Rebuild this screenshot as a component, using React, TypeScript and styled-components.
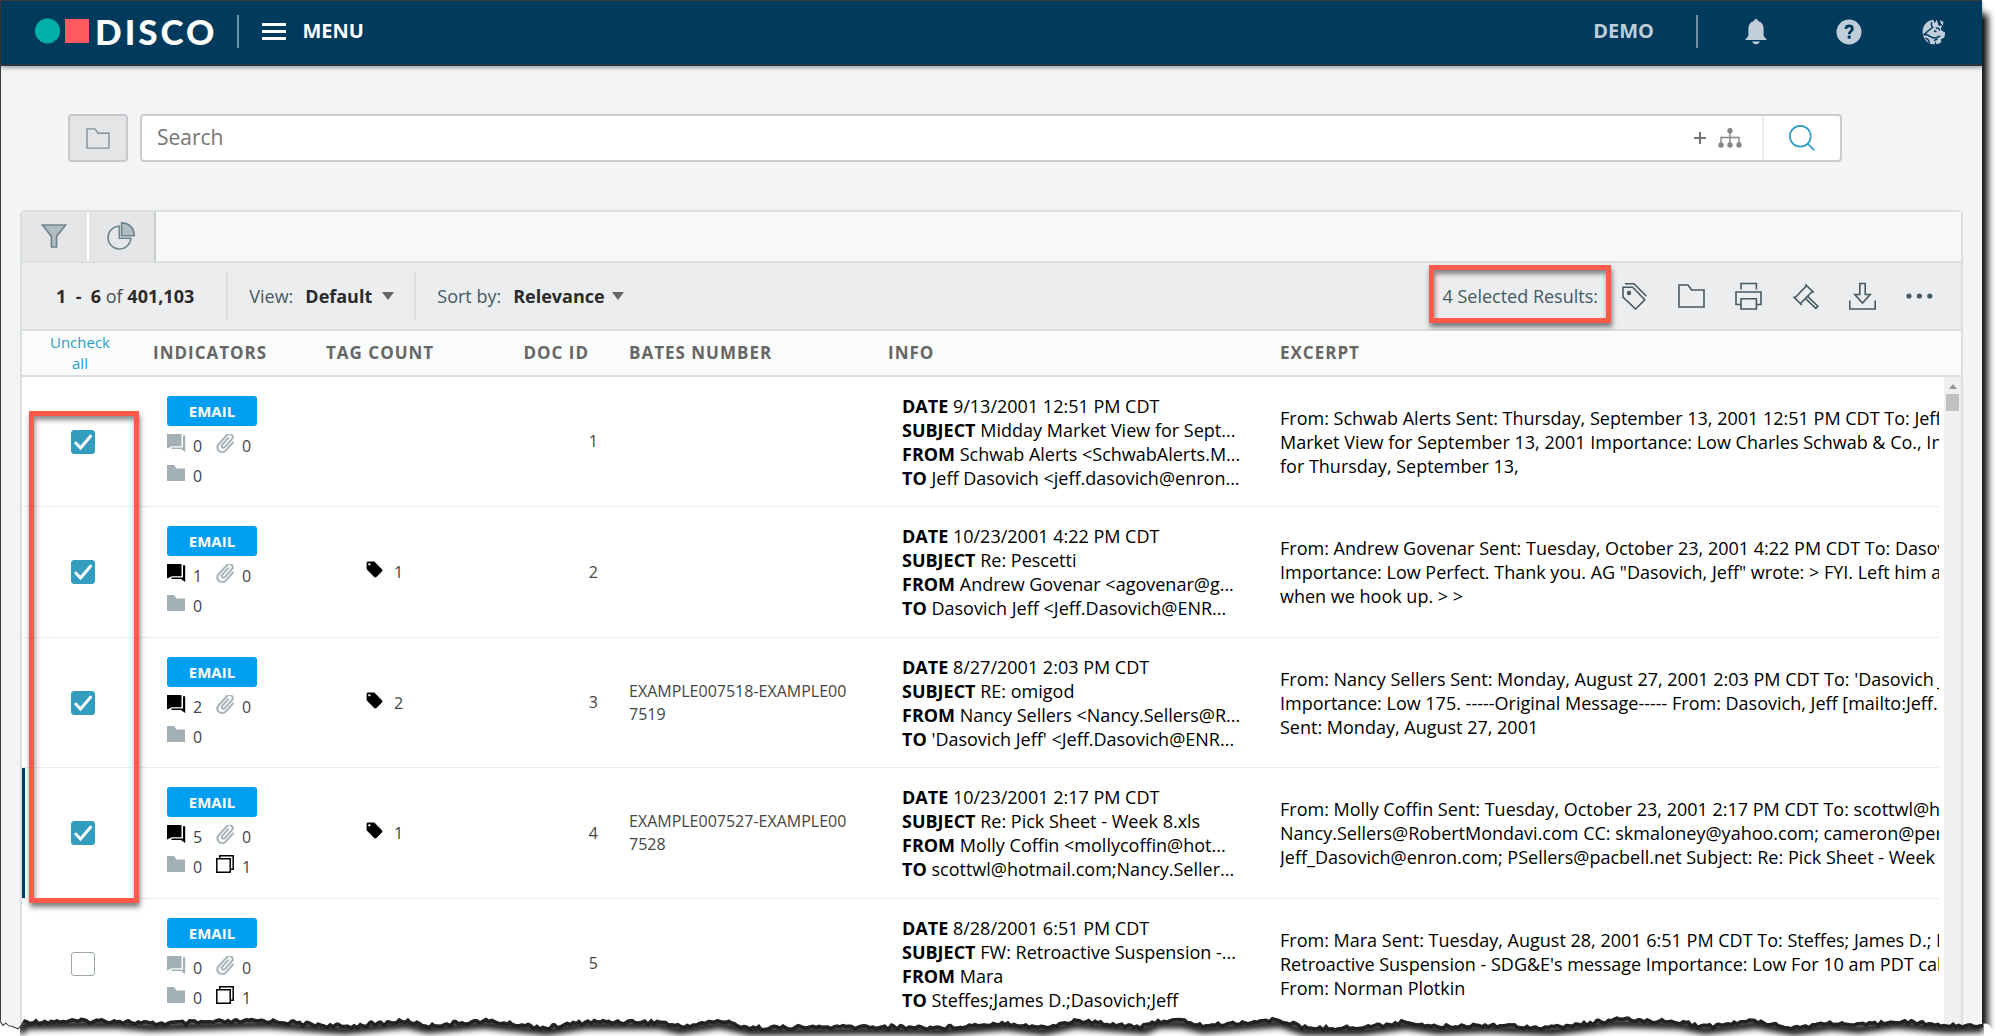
import React from "react";
import styled, { createGlobalStyle } from "styled-components";
import { MdLocalOffer } from "react-icons/md";

const c = {
  navy: "#003a5d",
  page: "#f3f4f6",
  line: "#dcdfe0",
  tool: "#ecedef",
  slate: "#455a64",
  blue: "#2e9bc4",
  email: "#009ff2",
  muted: "#a3b0b6",
  red: "#ff5a4a",
};

const GlobalStyle = createGlobalStyle`
  *, *::before, *::after { box-sizing: border-box; }
  html, body, #root { height: 100%; }
  body {
    margin: 0;
    overflow: hidden;
    background: #fff;
    font-family: "Open Sans", "Noto Sans", sans-serif;
    color: #000;
  }
  button, input, select { font: inherit; color: inherit; }
  svg { display: block; }
`;

const Stage = styled.div`
  position: relative;
  height: 100vh;
  padding-right: 13px;
  overflow: hidden;
`;

const Window = styled.div`
  display: flex;
  flex-direction: column;
  height: 100%;
  background: ${c.page};
  border-top: 1px solid #3d3d3d;
  border-left: 1px solid #3d3d3d;
  box-shadow: 6px 14px 7px #111;
`;

const Header = styled.header`
  display: flex;
  align-items: center;
  height: 65px;
  padding: 0 35px 3px 34px;
  background: ${c.navy};
  border-bottom: 2px solid #2b333c;
  box-shadow: 0 2px 4px rgba(0, 0, 0, 0.35);
`;

const LogoGroup = styled.div`
  display: flex;
  align-items: center;
  gap: 20px;
`;

const Logo = styled.a`
  display: flex;
  align-items: center;
  gap: 5px;
  height: 28px;
  color: #fff;
  text-decoration: none;
  font: 900 35px/28px Lato, "Open Sans", sans-serif;
  letter-spacing: 3px;
`;

const HeaderRule = styled.span`
  width: 2px;
  height: 33px;
  background: #6f90a5;
`;

const MenuButton = styled.button`
  display: flex;
  align-items: center;
  gap: 16px;
  margin-left: 23px;
  padding: 0;
  border: 0;
  background: none;
  color: #fff;
  font-size: 20px;
  font-weight: 700;
  line-height: 28px;
`;

const HeaderRight = styled.div`
  display: flex;
  align-items: center;
  margin-left: auto;
  color: #bfced8;
`;

const TextButton = styled.button`
  margin-right: 42px;
  padding: 0;
  border: 0;
  background: none;
  font-size: 20px;
  font-weight: 700;
  line-height: 28px;
`;

const HeaderIcons = styled.div`
  display: flex;
  gap: 66px;
  margin-left: 44px;
  padding-top: 2px;
  > :last-child { margin-left: -8px; }
`;

const IconButton = styled.button`
  display: grid;
  place-items: center;
  width: 27px;
  height: 28px;
  padding: 0;
  border: 0;
  background: none;
`;

const SearchRow = styled.form`
  display: flex;
  gap: 12px;
  height: 48px;
  margin: 48px 140px 48px 67px;
`;

const FolderButton = styled.button`
  display: grid;
  place-items: center;
  width: 60px;
  padding: 0;
  border: 2px solid #c6c9cb;
  border-radius: 4px;
  background: #e4e5e7;
`;

const SearchBox = styled.div`
  display: flex;
  flex: 1;
  align-items: center;
  border: 2px solid #c9cccd;
  border-radius: 4px;
  background: #fff;
`;

const SearchInput = styled.input`
  flex: 1;
  min-width: 0;
  padding: 0 0 3px 15px;
  border: 0;
  outline: 0;
  background: none;
  font-size: 21px;
  line-height: 32px;
  &::placeholder {
    color: #757575;
    opacity: 1;
  }
`;

const SearchExtras = styled.div`
  display: flex;
  align-items: center;
  gap: 12px;
  margin-right: 20px;
`;

const SearchSubmit = styled.button`
  display: grid;
  place-items: center;
  width: 78px;
  height: 44px;
  padding: 0;
  border: 0;
  border-left: 2px solid #ebeced;
  background: none;
`;

const Panel = styled.main`
  display: flex;
  flex: 1;
  flex-direction: column;
  min-height: 0;
  margin: 0 19px;
  border: 2px solid ${c.line};
  border-bottom: 0;
  border-radius: 5px 5px 0 0;
  background: #fff;
`;

const Tabs = styled.div`
  display: flex;
  height: 51px;
  background: #f7f9f9;
  border-bottom: 2px solid ${c.line};
`;

const Tab = styled.button`
  display: grid;
  place-items: center;
  width: 67px;
  padding: 0 1px 1px 0;
  border: 0;
  border-right: 2px solid ${(p: { $last?: boolean }) => (p.$last ? "#c9cccd" : "#fff")};
  background: #e4e6e7;
`;

const Toolbar = styled.div`
  display: flex;
  flex: none;
  align-items: center;
  height: 68px;
  padding: 0 28px 0 34px;
  background: ${c.tool};
  border-bottom: 2px solid ${c.line};
  color: ${c.slate};
  font-size: 18px;
  line-height: 24px;
`;

const Range = styled.div`
  padding-right: 12px;
  white-space: pre;
  color: #4c4c4c;
  b { color: #2b2b2b; }
`;

const ToolRule = styled.span`
  width: 2px;
  height: 50px;
  margin: 0 21px 0 20px;
  background: #dcdfe1;
`;

const Picker = styled.label`
  display: flex;
  align-items: center;
  gap: 12px;
  svg { margin-left: -5px; }
`;

const PickerSelect = styled.select`
  appearance: none;
  min-width: 70px;
  padding: 0;
  border: 0;
  outline: 0;
  background: none;
  color: #2b2b2b;
  font-weight: 700;
`;

const Selection = styled.div`
  display: flex;
  align-items: center;
  gap: 10px;
  margin-left: auto;
`;

const SelectedCount = styled.output`
  display: block;
  margin-bottom: 4px;
  padding: 14px 8px 10px;
  border: 5px solid ${c.red};
  box-shadow: 1px 4px 5px rgba(0, 0, 0, 0.5), inset 1px 4px 5px rgba(0, 0, 0, 0.45);
`;

const Actions = styled.div`
  display: flex;
  gap: 30px;
`;

const List = styled.div`
  position: relative;
  display: flex;
  flex: 1;
  min-height: 0;
  overflow: hidden;
`;

const Table = styled.table`
  flex: 1;
  width: 100%;
  min-width: 0;
  height: max-content;
  border-collapse: separate;
  border-spacing: 0;
  table-layout: fixed;
`;

const Col = styled.col`
  width: ${(p: { $w?: number }) => (p.$w ? `${p.$w}px` : "auto")};
`;

const Th = styled.th`
  height: 46px;
  padding: ${(p: { $end?: boolean }) => (p.$end ? "0 31px 0 0" : "0 0 0 9px")};
  background: #fafcfb;
  border-bottom: 2px solid ${c.line};
  color: #666;
  font-size: 17px;
  font-weight: 700;
  letter-spacing: 1px;
  line-height: 20px;
  text-align: ${(p: { $end?: boolean }) => (p.$end ? "right" : "left")};
`;

const CheckTh = styled(Th)`
  padding: 0 6px 0 0;
  text-align: center;
`;

const UncheckAll = styled.button`
  width: 76px;
  padding: 0;
  border: 0;
  background: none;
  color: ${c.blue};
  font-size: 15px;
  font-weight: 400;
  line-height: 21px;
`;

const Td = styled.td`
  height: 130px;
  padding: 0 0 0 ${(p: { $left?: number }) => p.$left ?? 9}px;
  border-bottom: 1px solid #ececee;
  color: #444;
  font-size: 16px;
  line-height: 23px;
`;

const Row = styled.tr`
  &:nth-child(even) > td { height: 131px; }
  > td:first-child {
    box-shadow: ${(p: { $current?: boolean }) => (p.$current ? `inset 3px 0 0 ${c.navy}` : "none")};
  }
`;

const NumberTd = styled(Td)`
  padding: 0 22px 0 0;
  text-align: right;
`;

const BatesTd = styled(Td)`
  padding-right: 24px;
  word-break: break-all;
`;

const CheckLabel = styled.label`
  display: grid;
  place-items: center;
  > * { grid-area: 1 / 1; }
  svg { pointer-events: none; }
`;

const CheckInput = styled.input`
  appearance: none;
  width: 24px;
  height: 24px;
  margin: 0;
  border: 1px solid #9aa7ad;
  border-radius: 3px;
  background: #fff;
  &:checked {
    border-color: #329dbe;
    background: #329dbe;
  }
`;

const Badge = styled.span`
  display: block;
  width: 90px;
  margin: 0 0 8px;
  border-radius: 3px;
  background: ${c.email};
  color: #fff;
  font-size: 15px;
  font-weight: 700;
  line-height: 30px;
  text-align: center;
`;

const Indicators = styled.div`
  display: grid;
  grid-template-columns: 49px 49px;
  grid-template-rows: 30px 24px;
`;

const Indicator = styled.span`
  display: flex;
  gap: 7px;
  color: ${(p: { $on?: boolean }) => (p.$on ? "#000" : c.muted)};
`;

const Count = styled.span`
  color: #444;
  line-height: 24px;
`;

const TagCount = styled.span`
  display: flex;
  gap: 10px;
  color: #000;
`;

const InfoLine = styled.div`
  width: 350px;
  overflow: hidden;
  color: #000;
  font-size: 18px;
  line-height: 24px;
  white-space: nowrap;
`;

const Excerpt = styled.div`
  overflow: hidden;
  color: #000;
  font-size: 18px;
  line-height: 24px;
  white-space: pre;
`;

const ScrollSide = styled.div`
  display: flex;
  flex-direction: column;
  width: 22px;
`;

const ScrollHead = styled.div`
  height: 46px;
  background: #fafcfb;
  border-bottom: 2px solid ${c.line};
`;

const Track = styled.div`
  display: flex;
  flex: 1;
  flex-direction: column;
  align-items: center;
  gap: 5px;
  margin-left: 5px;
  padding-top: 7px;
  background: #f0f0f0;
`;

const Thumb = styled.div`
  width: 13px;
  height: 17px;
  background: #c1c1c1;
`;

const ColumnMarker = styled.div`
  position: absolute;
  top: 80px;
  left: 7px;
  width: 110px;
  height: 492px;
  border: 5px solid ${c.red};
  box-shadow: 1px 4px 5px rgba(0, 0, 0, 0.5), inset 1px 4px 5px rgba(0, 0, 0, 0.45);
  pointer-events: none;
`;

const TornEdge = styled.svg`
  position: absolute;
  bottom: 0;
  left: 0;
  width: 100%;
  height: 40px;
`;

/* ---------- icons ---------- */

const LogoMark = () => (
  <svg width="55" height="26" viewBox="0 0 55 26" aria-hidden="true">
    <circle cx="12.5" cy="13" r="12.5" fill="#00b0a9" />
    <rect x="30" y="1" width="24" height="24" fill="#ff5a5f" />
  </svg>
);

const Burger = () => (
  <svg width="24" height="17" viewBox="0 0 24 17" fill="#fff">
    <path d="M0 0h24v3H0zM0 7h24v3H0zM0 14h24v3H0z" />
  </svg>
);

const Bell = () => (
  <svg width="22" height="26" viewBox="0 0 22 26" fill="currentColor">
    <path d="M11 0c1.200 0 2 .8 2 1.900 3.600.9 5.600 3.800 5.600 7.600v6.300c0 1.300.7 2.200 1.700 3 .8.6 1.200 1.200 1.200 2.200H.5c0-1 .4-1.600 1.200-2.200 1-.8 1.700-1.700 1.700-3V9.500c0-3.800 2-6.700 5.600-7.600C9 .8 9.800 0 11 0zM7.200 22.500h7.600c-.6 1.700-2 2.700-3.800 2.700s-3.200-1-3.800-2.700z" />
  </svg>
);

const Help = () => (
  <svg width="26" height="26" viewBox="0 0 26 26">
    <circle cx="13" cy="13" r="12.500" fill="currentColor" />
    <path d="M9.800 9.800c.2-1.900 1.500-3 3.300-3 1.900 0 3.300 1.100 3.300 2.900 0 2.600-3.200 2.600-3.200 5.500" fill="none" stroke={c.navy} strokeWidth="2.800" />
    <rect x="11.700" y="16.600" width="3" height="3" fill={c.navy} />
  </svg>
);

const Husky = () => (
  <svg width="24" height="26" viewBox="0 0 24 26">
    <path d="M11 .8C4.800 1.600.6 6.600.6 13c0 6 4.200 11.200 9.800 12.200h2.400l.4-3 1.400 3c1.800-.3 3.400-1 4.800-2.200l-.6-2.600 3.400-2c.8-1.600.9-3.400.7-5.400-1.800-.2-3.500-1.200-4.100-3l1.400-3.800c-1.200.6-2.400.8-3.600.4L14.800.8l-2 3.200z" fill="currentColor" />
    <path d="M18 1l3.400 1.800-.4 3.600-2-1.600z" fill="currentColor" />
    <path d="M9.600 3c-.8 2.200-.2 3.800 1 5.400L7.200 11 2 15.600l4.600.4M13.800 9.400c2-1 3.800 0 3.800 2.400M12 11.800l2.400 1M6 16.800c2.600.2 4.200 2.600 7 2.200 2.200-.2 3-1.800 5.200-1.800M12 21.600l3.600-1.800M3.200 19.200c2 .2 3.600 1.600 4.200 4.600" fill="none" stroke={c.navy} strokeWidth="1.500" />
  </svg>
);

const FolderLine = ({ color = c.slate, width = 27 }: { color?: string; width?: number }) => (
  <svg width={width} height={Math.round((width * 24) / 27)} viewBox="0 0 27 24" fill="none" stroke={color} strokeWidth="1.600">
    <path d="M1 23V1h9l3.600 5H26v17z" />
  </svg>
);

const Sitemap = () => (
  <svg width="24" height="20" viewBox="0 0 24 20" fill="#858585">
    <circle cx="12" cy="2.800" r="2.700" />
    <circle cx="3" cy="17" r="2.700" />
    <circle cx="12" cy="17" r="2.700" />
    <circle cx="21" cy="17" r="2.700" />
    <path d="M3 16V9.500h18V16M12 3v13" fill="none" stroke="#858585" strokeWidth="1.400" />
  </svg>
);

const Plus = () => (
  <svg width="12" height="12" viewBox="0 0 12 12" fill="#757575">
    <path d="M5 0h2v5h5v2H7v5H5V7H0V5h5z" />
  </svg>
);

const Magnifier = () => (
  <svg width="26" height="26" viewBox="0 0 26 26" fill="none" stroke={c.blue} strokeWidth="1.700">
    <circle cx="11.300" cy="11.300" r="10.400" />
    <path d="M18.500 18.500l6.700 6.700" />
  </svg>
);

const Funnel = () => (
  <svg width="26" height="24" viewBox="0 0 26 24" fill="#b0bcc1" stroke="#6f858d" strokeWidth="1.600">
    <path d="M1.400 1h23.200L15.600 12.400V23h-5.200V12.400z" />
  </svg>
);

const Pie = () => (
  <svg width="28" height="28" viewBox="0 0 28 28" stroke="#6f858d" strokeWidth="1.600">
    <path d="M12.300 4.200A11.400 11.400 0 1 0 23.800 16.200H12.300z" fill="none" />
    <path d="M14.600.900V13.700H27.200C27.200 6 22 .900 14.600.900z" fill="#b0bcc1" />
  </svg>
);

const action = { fill: "none", stroke: c.slate, strokeWidth: 1.600 };

const TagsLine = () => (
  <svg width="27" height="28" viewBox="0 0 27 28" {...action}>
    <path d="M2 5.200v10L14.600 27l9.200-9.200L11.600 5.200z" />
    <path d="M4 1.800h9l12.400 12.400" />
    <circle cx="8" cy="11" r="2.200" fill={c.slate} stroke="none" />
  </svg>
);

const Printer = () => (
  <svg width="27" height="28" viewBox="0 0 27 28" {...action}>
    <path d="M6 7.500V1.500h15.400v6M6 22.500H1V10h25v12.500h-5" />
    <path d="M6 16.800h15.400V27H6z" />
  </svg>
);

const Gavel = () => (
  <svg width="27" height="28" viewBox="0 0 27 28" {...action}>
    <path d="M2.800 16L14.600 3.600l5.800 5.600L8.400 21.600zM1.400 14.600l8.400 8.400M13.200 2.200l8.600 8.400" />
    <path d="M13.400 16.400l10.400 10 2-2.200-10.400-10" />
  </svg>
);

const Download = () => (
  <svg width="27" height="28" viewBox="0 0 27 28" {...action}>
    <path d="M.8 18.500V27h25.400v-8.500" />
    <path d="M10.800 1.500h5.400v11h5L13.500 21l-7.700-8.500h5z" />
  </svg>
);

const Dots = () => (
  <svg width="27" height="6" viewBox="0 0 27 6" fill={c.slate}>
    <circle cx="3" cy="3" r="2.600" />
    <circle cx="13.400" cy="3" r="2.600" />
    <circle cx="23.800" cy="3" r="2.600" />
  </svg>
);

const Caret = () => (
  <svg width="12" height="8" viewBox="0 0 12 8" fill="#666">
    <path d="M0 0h12L6 8z" />
  </svg>
);

const Check = () => (
  <svg width="24" height="24" viewBox="0 0 24 24" fill="none" stroke="#fff" strokeWidth="3" strokeLinecap="round">
    <path d="M4.800 13l4.700 5L19.500 6.200" />
  </svg>
);

const Chat = () => (
  <svg width="19" height="19" viewBox="0 0 19 19" fill="currentColor">
    <path d="M0 0h14.500v12.300H4.800L0 14.500z" />
    <path d="M16 1.200h2.200V18L14 15H4.500v-1.400H16z" />
  </svg>
);

const Clip = () => (
  <svg width="19" height="19" viewBox="2.500 3 19 19" fill="currentColor" stroke="currentColor" strokeWidth=".5">
    <path
      transform="rotate(42 12 12)"
      d="M16.500 6v11.500c0 2.210-1.790 4-4 4s-4-1.790-4-4V5a2.500 2.500 0 0 1 5 0v10.500c0 .55-.45 1-1 1s-1-.45-1-1V6H10v9.500a2.500 2.500 0 0 0 5 0V5c0-2.210-1.790-4-4-4S7 2.790 7 5v12.500c0 3.040 2.460 5.500 5.500 5.500s5.500-2.460 5.500-5.500V6z"
    />
  </svg>
);

const FolderSolid = () => (
  <svg width="19" height="18" viewBox="0 0 19 18" fill="currentColor">
    <path d="M0 1h7l2.500 3.500H18V17H0z" />
  </svg>
);

const Copies = () => (
  <svg width="19" height="19" viewBox="0 0 19 19" fill="none" stroke="#000" strokeWidth="1.500">
    <path d="M.8 3.800h13.400v13.400H.8z" />
    <path d="M3.800 3.500V.8h13.400v13.400h-2.800" />
  </svg>
);

const ArrowUp = () => (
  <svg width="8" height="5" viewBox="0 0 8 5" fill="#999">
    <path d="M0 5h8L4 0z" />
  </svg>
);

/* ---------- torn bottom edge ---------- */

const profile: [number, number][] = [
  [0, 26], [14, 31], [20, 32], [24, 24], [115, 23], [150, 26], [267, 23], [344, 29], [407, 23], [428, 28],
  [484, 23], [547, 30], [585, 24], [660, 24], [680, 29], [720, 23], [750, 30], [890, 29], [942, 30],
  [1005, 25], [1044, 30], [1075, 23], [1145, 29], [1158, 23], [1183, 23], [1203, 28], [1280, 22],
  [1304, 30], [1361, 30], [1406, 24], [1438, 29], [1488, 27], [1552, 30], [1616, 22], [1680, 24],
  [1705, 29], [1756, 23], [1794, 30], [1832, 25], [1858, 28], [1896, 23], [1947, 28], [1984, 27], [1995, 34],
];

const heightAt = (x: number) => {
  const i = Math.max(1, profile.findIndex(([px]) => px >= x));
  const [x0, y0] = profile[i - 1];
  const [x1, y1] = profile[i];
  return y0 + ((y1 - y0) * (x - x0)) / (x1 - x0);
};

const jagged = Array.from({ length: 666 }, (_, i) => {
  const x = Math.min(1995, i * 3);
  const noise = Math.sin(i * 12.9898) * 43758.5453;
  return `${x},${Math.round((heightAt(x) + (noise - Math.floor(noise)) * 4 - 2) * 10) / 10}`;
});

const shade = profile.slice(2, -1).map(([x, y]) => `${x},${y + 5}`).join(" ");

const Torn = () => (
  <TornEdge viewBox="0 0 1995 40" preserveAspectRatio="none" aria-hidden="true">
    <defs>
      <clipPath id="below-tear">
        <polygon points={`${jagged.join(" ")} 1995,40 0,40`} />
      </clipPath>
      <filter id="soften" x="0" y="-1" width="1" height="3">
        <feGaussianBlur stdDeviation="3" />
      </filter>
    </defs>
    <g clipPath="url(#below-tear)">
      <rect width="1995" height="40" fill="#fff" />
      <polyline points={shade} fill="none" stroke="#000" strokeWidth="8" filter="url(#soften)" />
      <polyline points={jagged.slice(8, 662).join(" ")} fill="none" stroke="#222" strokeWidth="7" />
      <polyline points={jagged.slice(0, 9).join(" ")} fill="none" stroke="#333" strokeWidth="2" />
    </g>
  </TornEdge>
);

/* ---------- data ---------- */

type Doc = {
  id: number;
  checked: boolean;
  current?: boolean;
  chats: number;
  copies?: number;
  tags?: number;
  bates?: string;
  info: [string, string][];
  excerpt: string;
};

const docs: Doc[] = [
  {
    id: 1, checked: true, chats: 0,
    info: [["DATE", "9/13/2001 12:51 PM CDT"], ["SUBJECT", "Midday Market View for Sept..."], ["FROM", "Schwab Alerts <SchwabAlerts.M..."], ["TO", "Jeff Dasovich <jeff.dasovich@enron..."]],
    excerpt: "From: Schwab Alerts Sent: Thursday, September 13, 2001 12:51 PM CDT To: Jeff\nMarket View for September 13, 2001 Importance: Low Charles Schwab & Co., Inc.\nfor Thursday, September 13,",
  },
  {
    id: 2, checked: true, chats: 1, tags: 1,
    info: [["DATE", "10/23/2001 4:22 PM CDT"], ["SUBJECT", "Re: Pescetti"], ["FROM", "Andrew Govenar <agovenar@g..."], ["TO", "Dasovich Jeff <Jeff.Dasovich@ENR..."]],
    excerpt: "From: Andrew Govenar Sent: Tuesday, October 23, 2001 4:22 PM CDT To: Dasovich\nImportance: Low Perfect. Thank you. AG \"Dasovich, Jeff\" wrote: > FYI. Left him a\nwhen we hook up. > >",
  },
  {
    id: 3, checked: true, chats: 2, tags: 2, bates: "EXAMPLE007518-EXAMPLE007519",
    info: [["DATE", "8/27/2001 2:03 PM CDT"], ["SUBJECT", "RE: omigod"], ["FROM", "Nancy Sellers <Nancy.Sellers@R..."], ["TO", "'Dasovich Jeff' <Jeff.Dasovich@ENR..."]],
    excerpt: "From: Nancy Sellers Sent: Monday, August 27, 2001 2:03 PM CDT To: 'Dasovich Jeff'\nImportance: Low 175. -----Original Message----- From: Dasovich, Jeff [mailto:Jeff.\nSent: Monday, August 27, 2001",
  },
  {
    id: 4, checked: true, current: true, chats: 5, copies: 1, tags: 1, bates: "EXAMPLE007527-EXAMPLE007528",
    info: [["DATE", "10/23/2001 2:17 PM CDT"], ["SUBJECT", "Re: Pick Sheet - Week 8.xls"], ["FROM", "Molly Coffin <mollycoffin@hot..."], ["TO", "scottwl@hotmail.com;Nancy.Seller..."]],
    excerpt: "From: Molly Coffin Sent: Tuesday, October 23, 2001 2:17 PM CDT To: scottwl@ho\nNancy.Sellers@RobertMondavi.com CC: skmaloney@yahoo.com; cameron@perf\nJeff_Dasovich@enron.com; PSellers@pacbell.net Subject: Re: Pick Sheet - Week",
  },
  {
    id: 5, checked: false, chats: 0, copies: 1,
    info: [["DATE", "8/28/2001 6:51 PM CDT"], ["SUBJECT", "FW: Retroactive Suspension -..."], ["FROM", "Mara"], ["TO", "Steffes;James D.;Dasovich;Jeff"]],
    excerpt: "From: Mara Sent: Tuesday, August 28, 2001 6:51 PM CDT To: Steffes; James D.; D\nRetroactive Suspension - SDG&E's message Importance: Low For 10 am PDT call\nFrom: Norman Plotkin",
  },
];

const actions = [
  { label: "Tag", icon: <TagsLine /> },
  { label: "Add to folder", icon: <FolderLine /> },
  { label: "Print", icon: <Printer /> },
  { label: "Produce", icon: <Gavel /> },
  { label: "Download", icon: <Download /> },
  { label: "More", icon: <Dots /> },
];

const DocRow = ({ doc, checked, onToggle }: { doc: Doc; checked: boolean; onToggle: () => void }) => (
  <Row $current={doc.current}>
    <Td $left={0}>
      <CheckLabel>
        <CheckInput type="checkbox" aria-label={`Select document ${doc.id}`} checked={checked} onChange={onToggle} />
        {checked && <Check />}
      </CheckLabel>
    </Td>
    <Td $left={23}>
      <Badge>EMAIL</Badge>
      <Indicators>
        <Indicator $on={doc.chats > 0}><Chat /><Count>{doc.chats}</Count></Indicator>
        <Indicator><Clip /><Count>0</Count></Indicator>
        <Indicator><FolderSolid /><Count>0</Count></Indicator>
        {doc.copies && <Indicator $on><Copies /><Count>{doc.copies}</Count></Indicator>}
      </Indicators>
    </Td>
    <Td $left={48}>
      {doc.tags && <TagCount><MdLocalOffer size={19} /><Count>{doc.tags}</Count></TagCount>}
    </Td>
    <NumberTd>{doc.id}</NumberTd>
    <BatesTd>{doc.bates}</BatesTd>
    <Td $left={23}>
      {doc.info.map(([label, value]) => (
        <InfoLine key={label}><b>{label}</b> {value}</InfoLine>
      ))}
    </Td>
    <Td><Excerpt>{doc.excerpt}</Excerpt></Td>
  </Row>
);

export default function App() {
  const [selected, setSelected] = React.useState(() => docs.filter((d) => d.checked).map((d) => d.id));
  const toggle = (id: number) =>
    setSelected((ids) => (ids.includes(id) ? ids.filter((i) => i !== id) : [...ids, id]));

  return (
    <Stage>
      <GlobalStyle />
      <Window>
        <Header>
          <LogoGroup>
            <Logo href="#"><LogoMark />DISCO</Logo>
            <HeaderRule />
          </LogoGroup>
          <MenuButton type="button"><Burger />MENU</MenuButton>
          <HeaderRight>
            <TextButton type="button">DEMO</TextButton>
            <HeaderRule />
            <HeaderIcons>
              <IconButton type="button" aria-label="Notifications"><Bell /></IconButton>
              <IconButton type="button" aria-label="Help"><Help /></IconButton>
              <IconButton type="button" aria-label="Account"><Husky /></IconButton>
            </HeaderIcons>
          </HeaderRight>
        </Header>

        <SearchRow onSubmit={(e) => e.preventDefault()}>
          <FolderButton type="button" aria-label="Folders"><FolderLine color="#7f9299" width={24} /></FolderButton>
          <SearchBox>
            <SearchInput type="text" placeholder="Search" aria-label="Search" />
            <SearchExtras><Plus /><Sitemap /></SearchExtras>
            <SearchSubmit type="submit" aria-label="Run search"><Magnifier /></SearchSubmit>
          </SearchBox>
        </SearchRow>

        <Panel>
          <Tabs>
            <Tab type="button" aria-label="Filters"><Funnel /></Tab>
            <Tab type="button" aria-label="Charts" $last><Pie /></Tab>
          </Tabs>
          <Toolbar>
            <Range><b>1</b>{"  "}<b>-</b>{"  "}<b>6</b> of <b>401,103</b></Range>
            <ToolRule />
            <Picker>
              View:
              <PickerSelect><option>Default</option></PickerSelect>
              <Caret />
            </Picker>
            <ToolRule />
            <Picker>
              Sort by:
              <PickerSelect><option>Relevance</option></PickerSelect>
              <Caret />
            </Picker>
            <Selection>
              <SelectedCount>{selected.length} Selected Results:</SelectedCount>
              <Actions>
                {actions.map((a) => (
                  <IconButton key={a.label} type="button" aria-label={a.label}>{a.icon}</IconButton>
                ))}
              </Actions>
            </Selection>
          </Toolbar>
          <List>
            <Table>
              <colgroup>
                <Col $w={122} />
                <Col $w={173} />
                <Col $w={191} />
                <Col $w={112} />
                <Col $w={259} />
                <Col $w={392} />
                <Col />
              </colgroup>
              <thead>
                <tr>
                  <CheckTh><UncheckAll type="button" onClick={() => setSelected([])}>Uncheck all</UncheckAll></CheckTh>
                  <Th>INDICATORS</Th>
                  <Th>TAG COUNT</Th>
                  <Th $end>DOC ID</Th>
                  <Th>BATES NUMBER</Th>
                  <Th>INFO</Th>
                  <Th>EXCERPT</Th>
                </tr>
              </thead>
              <tbody>
                {docs.map((doc) => (
                  <DocRow key={doc.id} doc={doc} checked={selected.includes(doc.id)} onToggle={() => toggle(doc.id)} />
                ))}
              </tbody>
            </Table>
            <ScrollSide>
              <ScrollHead />
              <Track><ArrowUp /><Thumb /></Track>
            </ScrollSide>
            <ColumnMarker />
          </List>
        </Panel>
      </Window>
      <Torn />
    </Stage>
  );
}
